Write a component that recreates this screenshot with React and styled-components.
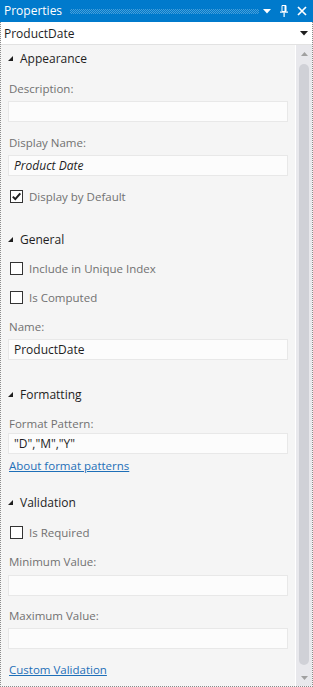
import React from "react";
import styled, { createGlobalStyle } from "styled-components";

const Global = createGlobalStyle`
  html, body { margin: 0; padding: 0; background: #ffffff; }
  body { font-family: "Open Sans", "Noto Sans", sans-serif; font-size: 11.5px; }
  * { box-sizing: border-box; }
`;

const Window = styled.div`
  width: 313px;
  height: 687px;
  display: flex;
  flex-direction: column;
  background: #f5f5f5;
`;

const TitleBar = styled.div`
  height: 22px;
  flex: none;
  background: #007acc;
  display: flex;
  align-items: center;
  padding: 0 6px 0 4px;
  color: #ffffff;
`;

const Title = styled.span`
  font-size: 12px;
  line-height: 22px;
  margin-right: 8px;
`;

const Grip = styled.div`
  flex: 1;
  height: 5px;
  margin-right: 4px;
  background: repeating-conic-gradient(rgba(255, 255, 255, 0.28) 0 25%, transparent 0 50%) 0 0 / 2px 2px;
`;

const TitleIcons = styled.div`
  display: flex;
  align-items: center;
  gap: 9px;
`;

const Body = styled.div`
  flex: 1;
  display: flex;
  flex-direction: column;
  border-color: #8c8c8c;
  border-width: 0 1px 1px 1px;
  border-style: dotted;
  min-height: 0;
`;

const Combo = styled.div`
  height: 23px;
  flex: none;
  background: #ffffff;
  border-bottom: 1px solid #e2e2e2;
  display: flex;
  align-items: center;
  justify-content: space-between;
  padding: 0 4px 0 3px;
  color: #1e1e1e;
  font-size: 12px;
`;

const Main = styled.div`
  flex: 1;
  display: flex;
  min-height: 0;
`;

const Pane = styled.div`
  flex: 1;
  display: flex;
  flex-direction: column;
  padding: 0 7px 0 7px;
  border-right: 1px solid #ffffff;
`;

const Header = styled.div`
  height: 26px;
  margin-top: ${(p) => p.mt || 0}px;
  display: flex;
  align-items: center;
  gap: 7px;
  color: #1e1e1e;
  font-size: 12px;
`;

const Label = styled.div`
  height: ${(p) => (p.tight ? 18 : 24)}px;
  line-height: ${(p) => (p.tight ? 18 : 24)}px;
  margin-top: ${(p) => p.mt || 0}px;
  padding-left: 1px;
  color: #717171;
`;

const Input = styled.div`
  height: 21px;
  margin-top: ${(p) => p.mt || 0}px;
  background: #fcfcfc;
  border: 1px solid #e8e8e8;
  padding: 0 5px;
  line-height: 19px;
  color: #1e1e1e;
  font-size: 12px;
  font-style: ${(p) => (p.italic ? "italic" : "normal")};
`;

const CheckRow = styled.div`
  height: 24px;
  margin-top: ${(p) => p.mt || 0}px;
  display: flex;
  align-items: center;
  gap: 6px;
  padding-left: 2px;
  color: #717171;
`;

const Box = styled.span`
  width: 13px;
  height: 13px;
  flex: none;
  border: 1px solid #333333;
  background: #ffffff;
  display: flex;
  align-items: center;
  justify-content: center;
`;

const Link = styled.a`
  display: block;
  height: 20px;
  line-height: 20px;
  margin-top: ${(p) => p.mt || 0}px;
  padding-left: 1px;
  color: #1e6fb8;
  text-decoration: underline;
  cursor: pointer;
`;

const ScrollBar = styled.div`
  width: 16px;
  flex: none;
  background: #e8e8ec;
  display: flex;
  flex-direction: column;
  align-items: center;
`;

const ArrowBtn = styled.div`
  height: 17px;
  flex: none;
  display: flex;
  align-items: center;
  justify-content: center;
`;

const Thumb = styled.div`
  flex: 1;
  width: 10px;
  margin: 2px 0 4px;
  background: #d0d1d7;
  border-radius: 5px;
`;

const Tri = () => (
  <svg width="5" height="5" viewBox="0 0 5 5">
    <polygon points="5,0 5,5 0,5" fill="#1e1e1e" />
  </svg>
);

const Check = () => (
  <svg width="11" height="11" viewBox="0 0 11 11">
    <path d="M1.8 5.6 L4.3 8.1 L9.3 2.4" stroke="#1e1e1e" strokeWidth="2" fill="none" />
  </svg>
);

const CheckItem = ({ checked, children, mt }) => (
  <CheckRow mt={mt}>
    <Box>{checked && <Check />}</Box>
    {children}
  </CheckRow>
);

export default function App() {
  return (
    <>
      <Global />
      <Window>
        <TitleBar>
          <Title>Properties</Title>
          <Grip />
          <TitleIcons>
            <svg width="8" height="5" viewBox="0 0 8 5">
              <polygon points="0,0 8,0 4,4.5" fill="#ffffff" />
            </svg>
            <svg width="8" height="12" viewBox="0 0 8 12">
              <path d="M2 0.5 H6 V6.5 H2 Z" fill="none" stroke="#ffffff" strokeWidth="1" />
              <rect x="4.5" y="1" width="1.5" height="5.5" fill="#ffffff" />
              <rect x="0" y="6.5" width="8" height="1.2" fill="#ffffff" />
              <rect x="3.5" y="7.5" width="1.2" height="4.5" fill="#ffffff" />
            </svg>
            <svg width="10" height="10" viewBox="0 0 10 10">
              <path d="M1 1 L9 9 M9 1 L1 9" stroke="#ffffff" strokeWidth="1.7" />
            </svg>
          </TitleIcons>
        </TitleBar>
        <Body>
          <Combo>
            <span>ProductDate</span>
            <svg width="8" height="5" viewBox="0 0 8 5">
              <polygon points="0,0 8,0 4,4.5" fill="#1e1e1e" />
            </svg>
          </Combo>
          <Main>
            <Pane>
              <Header>
                <Tri />
                Appearance
              </Header>
              <Label mt={6}>Description:</Label>
              <Input />
              <Label mt={9}>Display Name:</Label>
              <Input italic>Product Date</Input>
              <CheckItem checked mt={8}>
                Display by Default
              </CheckItem>

              <Header mt={18}>
                <Tri />
                General
              </Header>
              <CheckItem mt={4}>Include in Unique Index</CheckItem>
              <CheckItem mt={5}>Is Computed</CheckItem>
              <Label mt={6}>Name:</Label>
              <Input>ProductDate</Input>

              <Header mt={21}>
                <Tri />
                Formatting
              </Header>
              <Label tight mt={8}>
                Format Pattern:
              </Label>
              <Input>"D","M","Y"</Input>
              <Link mt={2}>About format patterns</Link>

              <Header mt={13}>
                <Tri />
                Validation
              </Header>
              <CheckItem mt={5}>Is Required</CheckItem>
              <Label mt={6}>Minimum Value:</Label>
              <Input mt={1} />
              <Label mt={8}>Maximum Value:</Label>
              <Input />
              <Link mt={11}>Custom Validation</Link>
            </Pane>
            <ScrollBar>
              <ArrowBtn>
                <svg width="7" height="4" viewBox="0 0 7 4">
                  <polygon points="0,4 7,4 3.5,0" fill="#a0a0a0" />
                </svg>
              </ArrowBtn>
              <Thumb />
              <ArrowBtn>
                <svg width="7" height="4" viewBox="0 0 7 4">
                  <polygon points="0,0 7,0 3.5,4" fill="#a0a0a0" />
                </svg>
              </ArrowBtn>
            </ScrollBar>
          </Main>
        </Body>
      </Window>
    </>
  );
}
